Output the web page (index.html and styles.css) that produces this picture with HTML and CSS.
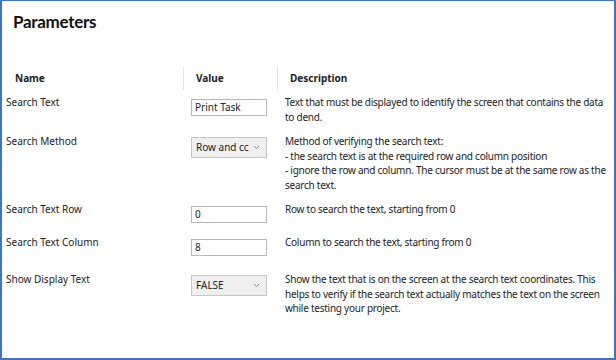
FILE: index.html
```html
<!DOCTYPE html>
<html lang="en">
<head>
  <meta charset="UTF-8">
  <title>Parameters</title>
  <link rel="stylesheet" href="styles.css">
</head>
<body>
  <div class="frame">
    <h1>Parameters</h1>

    <div class="params">
      <div class="head name">Name</div>
      <div class="head value">Value</div>
      <div class="head desc">Description</div>

      <div class="cell name">Search Text</div>
      <div class="cell value"><div class="field">Print Task</div></div>
      <div class="cell desc">Text that must be displayed to identify the screen that contains the data to dend.</div>

      <div class="cell name">Search Method</div>
      <div class="cell value">
        <div class="combo">
          <span class="combo-text">Row and cc</span>
          <svg class="chevron" width="7" height="5" viewBox="0 0 7 5"><path d="M1 1 L3.5 3.5 L6 1" fill="none" stroke="#888" stroke-width="1"/></svg>
        </div>
      </div>
      <div class="cell desc">Method of verifying the search text:<br>- the search text is at the required row and column position<br>- ignore the row and column. The cursor must be at the same row as the search text.</div>

      <div class="cell name">Search Text Row</div>
      <div class="cell value"><div class="field">0</div></div>
      <div class="cell desc">Row to search the text, starting from 0</div>

      <div class="cell name">Search Text Column</div>
      <div class="cell value"><div class="field">8</div></div>
      <div class="cell desc">Column to search the text, starting from 0</div>

      <div class="cell name spaced">Show Display Text</div>
      <div class="cell value spaced">
        <div class="combo">
          <span class="combo-text">FALSE</span>
          <svg class="chevron" width="7" height="5" viewBox="0 0 7 5"><path d="M1 1 L3.5 3.5 L6 1" fill="none" stroke="#888" stroke-width="1"/></svg>
        </div>
      </div>
      <div class="cell desc spaced">Show the text that is on the screen at the search text coordinates. This helps to verify if the search text actually matches the text on the screen while testing your project.</div>
    </div>
  </div>
</body>
</html>
```

FILE: styles.css
```css
body {
  margin: 0;
  font-family: "Noto Sans", sans-serif;
  background: #fff;
  color: #222;
}

.frame {
  width: 616px;
  height: 360px;
  box-sizing: border-box;
  border: 1px solid #4472c4;
  border-left-width: 2px;
  border-right-width: 2px;
  border-bottom-width: 2px;
  padding: 0 0 0 4px;
  overflow: hidden;
}

h1 {
  margin: 10px 0 0 7px;
  font-family: Lato, "Noto Sans", sans-serif;
  font-size: 17px;
  line-height: 22px;
  font-weight: bold;
  letter-spacing: -0.3px;
  color: #111;
}

.params {
  display: grid;
  grid-template-columns: 177px 94px 1fr;
  margin-top: 34px;
  font-size: 10px;
  line-height: 14.5px;
}

.head {
  font-weight: bold;
  height: 23px;
  line-height: 23px;
  padding-left: 9px;
  margin-bottom: 5px;
}

.head.value,
.head.desc {
  border-left: 1px solid #e3e3e3;
  padding-left: 12px;
}

.cell {
  padding-bottom: 10px;
}

.cell.spaced {
  margin-top: 4px;
}

.cell.value {
  padding-left: 8px;
}

.cell.desc {
  padding-left: 8px;
  letter-spacing: -0.25px;
}

.field {
  margin: 4px 0 2px;
  width: 76px;
  height: 17px;
  box-sizing: border-box;
  border: 1px solid #b9b9b9;
  padding-left: 3px;
  line-height: 15px;
  background: #fff;
}

.combo {
  margin-top: 3px;
  width: 76px;
  height: 21px;
  box-sizing: border-box;
  border: 1px solid #c6c6c6;
  background: #efefef;
  display: flex;
  align-items: center;
  padding: 0 6px 0 4px;
  gap: 4px;
}

.combo-text {
  flex: 1;
  white-space: nowrap;
}

.chevron {
  flex: none;
}
```
